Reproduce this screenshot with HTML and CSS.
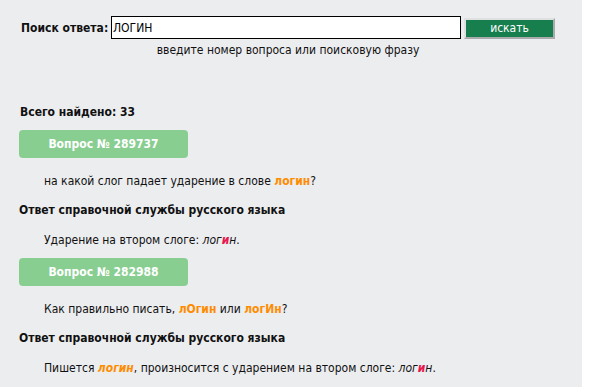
FILE: index.html
```html
<!DOCTYPE html>
<html lang="ru">
<head>
<meta charset="utf-8">
<link rel="stylesheet" href="styles.css">
</head>
<body>
<div class="page">
  <form class="search">
    <div class="search-row">
      <label class="search-label" for="q">Поиск ответа:</label>
      <input class="search-input" id="q" type="text" value="ЛОГИН">
      <button class="search-btn" type="button">искать</button>
    </div>
    <div class="hint">введите номер вопроса или поисковую фразу</div>
  </form>

  <div class="results">
    <div class="total">Всего найдено: 33</div>

    <div class="qbtn">Вопрос № 289737</div>
    <p class="qtext">на какой слог падает ударение в слове <b class="hl">логин</b>?</p>
    <p class="ahead">Ответ справочной службы русского языка</p>
    <p class="atext">Ударение на втором слоге: <i>лог<span class="stress">и</span>н</i>.</p>

    <div class="qbtn">Вопрос № 282988</div>
    <p class="qtext">Как правильно писать, <b class="hl">лОгин</b> или <b class="hl">логИн</b>?</p>
    <p class="ahead">Ответ справочной службы русского языка</p>
    <p class="atext">Пишется <b class="hl"><i>логин</i></b>, произносится с ударением на втором слоге: <i>лог<span class="stress">и</span>н</i>.</p>
  </div>
</div>
</body>
</html>
```

FILE: styles.css
```css
html, body {
  margin: 0;
  padding: 0;
  background: #ffffff;
}
body {
  font-family: "DejaVu Sans Condensed", "DejaVu Sans", sans-serif;
  font-size: 12px;
  color: #111111;
}
.page {
  width: 582px;
  min-height: 100vh;
  background: #ecedef;
  box-sizing: border-box;
  padding-top: 16px;
}
.search {
  width: 534px;
  margin-left: 21px;
}
.search-row {
  display: flex;
  align-items: center;
  height: 23px;
}
.search-label {
  font-weight: bold;
  white-space: nowrap;
  flex-shrink: 0;
  width: 90px;
}
.search-input {
  flex-shrink: 0;
  width: 350px;
  height: 23px;
  box-sizing: border-box;
  border: 1px solid #000;
  padding: 0 1px;
  font-family: "DejaVu Sans Condensed", "DejaVu Sans", sans-serif;
  font-size: 12px;
  color: #000;
  background: #fff;
  outline: none;
  margin: 0;
}
.search-btn {
  flex-shrink: 0;
  margin: 1px 0 0 3px;
  width: 91px;
  height: 21px;
  box-sizing: border-box;
  background: #177e4e;
  color: #fff;
  font-family: "DejaVu Sans Condensed", "DejaVu Sans", sans-serif;
  font-size: 12px;
  border: 2px solid;
  border-color: #dfe0e2 #a9abad #a9abad #dfe0e2;
  padding: 0;
}
.hint {
  text-align: center;
  margin-top: 3px;
  line-height: 16px;
}
.results {
  padding-left: 19px;
  margin-top: 46px;
}
.total {
  font-weight: bold;
  line-height: 16px;
  padding-left: 1px;
}
.qbtn {
  margin-top: 10px;
  width: 169px;
  height: 28px;
  line-height: 28px;
  border-radius: 4px;
  background: #88ce91;
  color: #fff;
  font-weight: bold;
  text-align: center;
}
p {
  margin: 0;
  line-height: 16px;
}
.qtext {
  margin-top: 15px;
  padding-left: 25px;
}
.ahead {
  margin-top: 13px;
  font-weight: bold;
}
.atext {
  margin-top: 14px;
  padding-left: 25px;
}
.atext + .qbtn {
  margin-top: 10px;
}
.hl {
  color: #ff8c00;
}
.stress {
  color: #e8174e;
  font-weight: bold;
}
```
